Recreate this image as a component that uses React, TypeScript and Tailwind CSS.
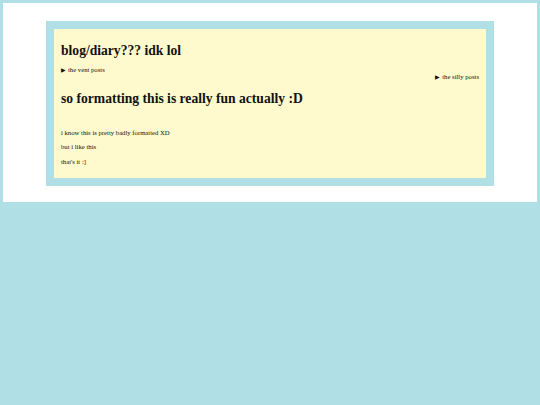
import React from "react";

const serif = { fontFamily: '"Liberation Serif", "Times New Roman", serif' };

function Summary({ label, right }: { label: string; right?: boolean }) {
  return (
    <div className={`flex h-[8px] items-center leading-[8px] ${right ? "justify-end" : ""}`}>
      <span className="mr-[2px] text-[6px] leading-[8px]">▶</span>
      <span className="text-[6.7px] leading-[8px]">{label}</span>
    </div>
  );
}

export default function App() {
  return (
    <div className="min-h-[405px] bg-[#b0e0e6] p-[3px] text-[#111]" style={serif}>
      <div className="flex h-[199px] justify-center bg-white pt-[18px]">
        <div className="h-[165px] w-[448px] bg-[#b0e0e6] p-[8px]">
          <div className="h-[149px] bg-[#fffacd] px-[7px] pt-[14px]">
            <h1 className="text-[13.6px] font-bold leading-[15px]">blog/diary??? idk lol</h1>
            <div className="mt-[8px]">
              <Summary label="the vent posts" />
            </div>
            <div className="-mt-[1px]">
              <Summary label="the silly posts" right />
            </div>
            <h1 className="mt-[10px] text-[13.6px] font-bold leading-[15px]">
              so formatting this is really fun actually :D
            </h1>
            <p className="mt-[23px] text-[6.7px] leading-[8px]">i know this is pretty badly formatted XD</p>
            <p className="mt-[6px] text-[6.7px] leading-[8px]">but i like this</p>
            <p className="mt-[7px] text-[6.7px] leading-[8px]">that's it :]</p>
          </div>
        </div>
      </div>
    </div>
  );
}
